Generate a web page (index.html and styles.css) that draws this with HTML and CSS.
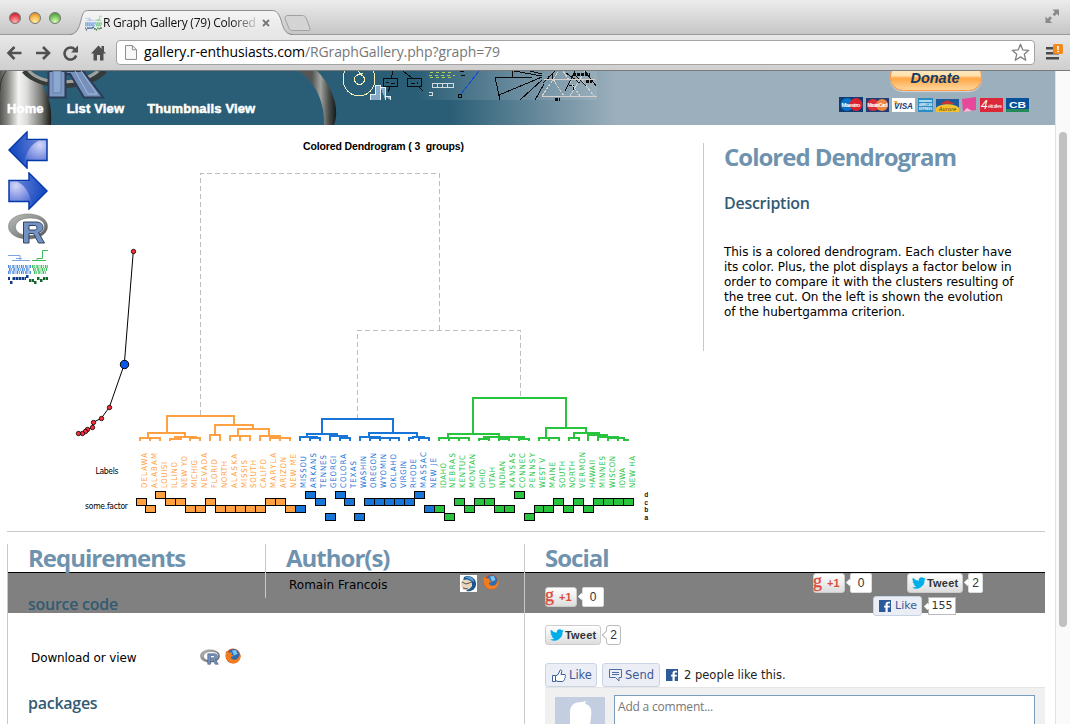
FILE: index.html
```html
<!DOCTYPE html>
<html lang="en">
<head>
<meta charset="utf-8">
<title>R Graph Gallery (79) Colored Dendrogram</title>
<link rel="stylesheet" href="styles.css">
</head>
<body>
<svg class="defs" width="0" height="0">
  <defs>
    <radialGradient id="blue" gradientUnits="userSpaceOnUse" cx="32" cy="14" r="27"><stop offset="0" stop-color="#d3d6f8"/><stop offset=".5" stop-color="#7d90e0"/><stop offset="1" stop-color="#1a4fc2"/></radialGradient>
    <linearGradient id="silver" x1="0" y1="0" x2="1" y2="1"><stop offset="0" stop-color="#b9bcb9"/><stop offset=".5" stop-color="#8d918e"/><stop offset="1" stop-color="#4c504d"/></linearGradient>
    <symbol id="rlogo" viewBox="0 0 40 30">
      <path fill-rule="evenodd" fill="url(#silver)" stroke="#666" stroke-width=".5" d="M20 .5C31 .5 39.500 5.500 39.500 13S31 25.500 20 25.500.500 20.500.500 13 9 .500 20 .500ZM22 4.500C13 4.500 7.500 8.500 7.500 13.500S13 22 22 22 36.500 18.500 36.500 13 31 4.500 22 4.500Z"/>
      <path fill-rule="evenodd" fill="#7292c4" stroke="#33425f" stroke-width="1" d="M15.500 8.500H28C33 8.500 35 11 35 14C35 17 33 18.500 30.500 19L36.500 29.500H30.500L25.500 20H21V29.500H15.500ZM21 12V16.500H27C29.500 16.500 29.500 12 27 12Z"/>
    </symbol>
    <symbol id="firefox" viewBox="0 0 16 16">
      <circle cx="8" cy="8" r="7.500" fill="#d9541e"/><circle cx="8.500" cy="6.500" r="5.500" fill="#2a6fb5"/><path d="M7 2.500L11 2 12.500 6 9 7.500Z" fill="#7cc4ee"/>
      <path d="M1 3C0 8 1 14 7.500 15.300C13 16 16.500 11 15.500 6C14.500 11 11 12.500 8 11.500C6 11 5.500 9.500 6.500 8.500L9 8 6.500 6.500 7 4.500 4 4.500Z" fill="#f07c1e"/><path d="M15.500 6C15 10 12 13.500 8 13.500L5 12.500C10 15 14 12 15.500 6Z" fill="#ffd257"/>
    </symbol>
    <symbol id="bird" viewBox="0 0 24 20"><path fill="#00aeea" d="M24 2.500a10 10 0 0 1-2.800.8A5 5 0 0 0 23.300.6a10 10 0 0 1-3.100 1.200 4.900 4.900 0 0 0-8.400 4.500A14 14 0 0 1 1.700 1.200a4.900 4.900 0 0 0 1.500 6.500A5 5 0 0 1 1 7.100c0 2.400 1.700 4.400 3.900 4.900a5 5 0 0 1-2.200.1 4.900 4.900 0 0 0 4.600 3.400A10 10 0 0 1 0 17.500 14 14 0 0 0 21.500 5Z"/></symbol>
    <symbol id="fb" viewBox="0 0 12 12"><path fill="#2d5b99" d="M0 0H12V12H0Z"/><path fill="#fff" d="M6.500 12V7.500H5V5.700H6.500V4.400C6.500 2.500 7.500 1.700 9 1.700H11V3.500H9.600C8.900 3.500 8.700 3.800 8.700 4.500V5.700H11L10.700 7.500H8.700V12Z"/></symbol>
  </defs>
</svg>

<div class="tabstrip">
  <div class="lights"><i class="red"></i><i class="amber"></i><i class="green"></i></div>
  <div class="tab">
    <svg class="tab-shape" width="224" height="25" viewBox="0 0 224 25"><defs><linearGradient id="tabfill" x2="0" y2="1"><stop stop-color="#f5f5f5"/><stop offset="1" stop-color="#e6e6e6"/></linearGradient></defs><path d="M0 25C8 25 10 18 12 10S15 .500 20 .500H203C208 .500 210 4 212 10S215 24.500 224 25Z" fill="url(#tabfill)"/><path d="M0 24.500C8 24.500 10 18 12 10S15 .500 20 .500H203C208 .500 210 4 212 10S215 24.500 224 24.500" fill="none" stroke="#8f8f8f"/></svg>
    <svg class="favicon" width="17" height="16" viewBox="0 0 40 35"><use href="#thumb"/></svg>
    <span class="tab-title">R Graph Gallery (79) Colored</span>
    <svg class="tab-close" width="8" height="8"><path d="M1 1L7 7M7 1L1 7" stroke="#777" stroke-width="1.800"/></svg>
  </div>
  <svg class="newtab" width="28" height="17"><path d="M1 4C1 1 2 .500 4 .500H18C20.500 .500 21.500 1.500 22.500 4L25.500 12C26.500 15 26 15.500 24 15.500H9C6.500 15.500 5.500 14.500 4.500 12Z" fill="#d4d4d4" stroke="#a2a2a2"/></svg>
  <svg class="fullscreen" width="15" height="15"><path d="M7.500 .500H14V7L11.800 4.800 9.500 7.200 7.500 5.200 9.800 2.900ZM7 14H.500V7.500L2.700 9.700 5 7.300 7 9.300 4.700 11.600Z" fill="#8a8a8a"/></svg>
</div>
<div class="toolbar">
  <svg class="nav-icons" width="104" height="18" viewBox="0 0 104 18">
    <g fill="none" stroke="#505050" stroke-width="2.600"><path d="M21.500 9H9.500M14.500 3L8.500 9 14.500 15M36 9H48M43 3L49 9 43 15"/><path d="M75 5.500A6 6 0 1 0 76.200 11.500" /></g>
    <path d="M78 1.500V8.500H71Z" fill="#505050"/>
    <path d="M98.500 1.500L106 9.500H103.500V16.500H100V11H97V16.500H93.500V9.500H91L94.500 5.800Z" fill="#505050"/>
    <path d="M101.500 2H104V7H101.500Z" fill="#505050"/>
  </svg>
  <div class="omnibox">
    <svg width="12" height="15" viewBox="0 0 13 16"><path d="M.5.500H8L12.500 5V15.500H.5ZM8 .500V5H12.500" fill="#f8f8f8" stroke="#808080"/></svg>
    <span class="url"><b>gallery.r-enthusiasts.com</b>/RGraphGallery.php?graph=79</span>
    <svg class="star" width="19" height="19" viewBox="0 0 19 19"><path d="M9.500 1.200L11.800 6.900 17.800 7.300 13.200 11.200 14.700 17.200 9.500 13.900 4.300 17.200 5.800 11.200 1.200 7.300 7.200 6.900Z" fill="#fff" stroke="#808080" stroke-width="1.300" stroke-linejoin="round"/></svg>
  </div>
  <svg class="menu" width="17" height="17"><path d="M0 4H13M0 9H13M0 14H13" stroke="#4a4a4a" stroke-width="2.600" transform="translate(0 .3)"/><rect x="7" y="0" width="10" height="10" rx="1.500" fill="#f28a1d"/><path d="M12 2V5.800M12 6.800V8.300" stroke="#fff" stroke-width="1.600"/></svg>
</div>

<div class="viewport">
<div class="page">
  <header class="banner">
    <svg class="banner-art" width="1055" height="54" viewBox="0 0 1055 54">
      <defs>
        <linearGradient id="sky" gradientUnits="userSpaceOnUse" x1="450" x2="615"><stop stop-color="#2a5e76"/><stop offset="1" stop-color="#9bafbc"/></linearGradient>
        <linearGradient id="sky2" gradientUnits="userSpaceOnUse" x1="415" x2="600"><stop stop-color="#2a5e76"/><stop offset="1" stop-color="#9bafbc"/></linearGradient>
        <linearGradient id="ring" gradientUnits="userSpaceOnUse" x1="0" x2="53"><stop stop-color="#555"/><stop offset=".14" stop-color="#888983"/><stop offset=".35" stop-color="#f4f4f2"/><stop offset=".5" stop-color="#ddd"/><stop offset=".78" stop-color="#777874"/><stop offset=".94" stop-color="#242622"/><stop offset="1" stop-color="#10201f"/></linearGradient>
        <linearGradient id="ring2" gradientUnits="userSpaceOnUse" x1="312" x2="336"><stop stop-color="#555"/><stop offset=".35" stop-color="#a0a39e"/><stop offset=".7" stop-color="#4a4e4b"/><stop offset="1" stop-color="#141b1c"/></linearGradient>
      </defs>
      <path fill="url(#sky)" d="M0 0H1055V54H0Z"/><path fill="url(#sky2)" d="M400 0H597V29H400Z"/>
      <path fill="url(#ring)" d="M0 0H30C43 10 53 28 51 54H0Z"/>
      <path fill="none" stroke="#333632" stroke-width="1" d="M6 0C1 8 0 12 0 20"/>
      <path d="M24 0C38 17 84 21 105 0" fill="none" stroke="#353b38" stroke-width="5"/><path d="M29 0C42 14 80 15 98 0" fill="none" stroke="#a0a19c" stroke-width="3"/>
      <path d="M48.500 0H65.500V26.500H48.500Z" fill="#7e9ac2" stroke="#2c3b55" stroke-width="2"/><path d="M53 0H61V22H53Z" fill="#8da8cf" stroke="#6280ab"/>
      <path d="M65.500 0H83L103 26.500H84L70 3H66Z" fill="#7591bb" stroke="#2c3b55" stroke-width="2"/><path d="M75 0L88 23H97L81 0" fill="none" stroke="#a4b9d8"/>
      <path d="M299 0H317C331 13 341 38 334 54H324C325 32 316 12 299 0Z" fill="url(#ring2)"/>
      <g shape-rendering="crispEdges" fill="none" stroke="#0b0b0b">
        <g stroke="#f3efb5"><ellipse cx="359" cy="8" rx="16" ry="17"/><circle cx="359.500" cy="8.500" r="5"/><path d="M359 2H363M358 0L361 3"/></g>
        <path d="M370.500 29V23.500H375.500V14.500H380.500V29M380.500 16.500H385.500V29M385.500 25.500H390.500V29" fill="#86abc8" stroke="#e7f0f5"/>
        <path d="M383.500 7.500H397.500V15.500H383.500ZM407.500 7.500H421.500V15.500H407.500ZM393 0L391 8M403 0L412 7M390 16L388 21M418 15L423 20M386 11H389M391 12H395M411 12H415M417 11V13M460 0H464M461 4H465"/>
        <path stroke="#abcf52" stroke-dasharray="3 3" d="M430 1H454M429 4H455M430 6H453"/><path stroke="#cfdbe0" d="M432.500 12.500H453.500V16.500H432.500ZM437.500 12V16M442.500 12V16M447.500 12V16M429 21.500H432.500V24.500H429"/>
        <path stroke="#124bd5" d="M461 23L479 0"/><path d="M458.500 23.500H461.500V26.500H458.500Z"/>
        <path d="M495 6L500 29M496 6H532M499 24L542 6M520 29L542 9M535 29L544 13M512 0V6M514 0L542 5M530 0L542 3M548 5V8M552 3V8M555 0L543 12M566 2L580 12M565 20L575 0M574 3L588 17M560 25H568M569 14H573V20M585 0L596 15"/>
        <path stroke="#d5d5ce" stroke-dasharray="3 1" d="M542 25L558 1M553 8L564 25M570 25L585 0M581 8L594 25M563 0L580 25"/><path stroke="#d5d0ce" d="M544 8H595M542 25H597"/>
        <path stroke-width="3" stroke-dasharray="3 1" d="M573 3H590M586 10H592M555 28H560"/>
      </g>
    </svg>
    <nav class="site-nav"><a>Home</a><a>List View</a><a>Thumbnails View</a></nav>
    <div class="donate">
      <div class="donate-btn">Donate</div>
      <svg class="cards" width="191" height="15" viewBox="0 0 191 15">
        <path fill="#123a73" d="M0 0H24V15H0Z"/><circle cx="8" cy="7.500" r="6.500" fill="#0875c8"/><circle cx="17" cy="7.500" r="6.500" fill="#d8232f"/><text x="2.500" y="10" font-size="6" textLength="19" class="card-t">Maestro</text>
        <path fill="#203c70" d="M27 1H50V15H27Z"/><circle cx="34" cy="8" r="6" fill="#d9303a"/><circle cx="43" cy="8" r="6" fill="#ee8745"/><text x="28.500" y="10" font-size="5" textLength="20" class="card-t">MasterCard</text>
        <path fill="#fff" d="M53 1H76V15H53Z"/><path fill="#f0a126" d="M54 4L58 4 60 9Z"/><text x="55" y="11.500" font-size="9" textLength="19" lengthAdjust="spacingAndGlyphs" class="card-v">VISA</text>
        <path fill="#2b8dc2" d="M79 1H94V15H79Z"/><path d="M80 3H93V5H80Z" fill="#a6daf0"/><text x="80" y="9" font-size="4" textLength="13" lengthAdjust="spacingAndGlyphs" class="card-t">AMERICAN</text><text x="80" y="13" font-size="4" textLength="13" lengthAdjust="spacingAndGlyphs" class="card-t">EXPRESS</text>
        <path fill="#1c5c9c" d="M97 2H120V15H97Z"/><path fill="#f6c12f" d="M97 11C101 6 116 6 120 11V15H97Z"/><path fill="#c93432" d="M101 7L108 3 116 7Z"/><text x="100" y="13.500" font-size="5" textLength="17" class="card-a">Aurore</text>
        <path fill="#e8489c" d="M123 2L137 0V13L124 15Z"/><path d="M124 15L128 11 133 14" fill="#f7bdd9"/>
        <path fill="#da2838" d="M141 1H164V15H141Z"/><text x="142" y="12" font-size="12" class="card-t it thin">4</text><text x="149" y="11" font-size="6" textLength="14" class="card-t it thin">étoiles</text>
        <path fill="#07519b" d="M167 1H190V15H167Z"/><path fill="#248b58" d="M167 12H190V15H167Z"/><text x="170" y="11" font-size="9" textLength="17" lengthAdjust="spacingAndGlyphs" class="card-t">CB</text>
      </svg>
    </div>
  </header>

  <main class="plot-row">
    <div class="side-icons">
      <svg width="40" height="38" viewBox="0 0 40 38"><path d="M1 19L19 1V8.500H39V29.500H19V37Z" fill="url(#blue)" stroke="#0438aa" stroke-width="1.500"/><path d="M2 19L18.500 3V9.500H31C21 14 18 24 16 32Z" fill="#1b4cc0" opacity=".6"/></svg>
      <svg width="40" height="38" viewBox="0 0 40 38"><g transform="matrix(-1 0 0 1 40 0)"><path d="M1 19L19 1V8.500H39V29.500H19V37Z" fill="url(#blue)" stroke="#0438aa" stroke-width="1.500"/><path d="M2 19L18.500 3V9.500H31C21 14 18 24 16 32Z" fill="#1b4cc0" opacity=".6"/></g></svg>
      <svg width="40" height="31"><use href="#rlogo" width="40" height="31"/></svg>
      <svg width="40" height="35" viewBox="0 0 40 35"><g id="thumb"><path d="M0 6.500H12V11M4 11.500H22M8 9.500H14" fill="none" stroke="#7ba5e8"/><path d="M24 11.500H38M29 11V9.500H34.500V1.500H40" fill="none" stroke="#3fbc5c"/><path d="M0 17.500H23M1 20.500H22M0 23.500H23" stroke="#4b89df" stroke-width="3" stroke-dasharray="1.500 .8 .8 1.200"/><path d="M24 17.500H40M25 20.500H39M26 23.500H38" stroke="#3cc15c" stroke-width="3" stroke-dasharray="1.500 .8 .8 1.200"/><path d="M0 29.500H2M4.500 29.500H18M18 27.500H21M2 33.500H5" stroke="#123a86" stroke-width="3" stroke-dasharray="2.500 .5"/><path d="M21 31.500H26M26 33.500H29M29 29.500H32M32 31.500H35M35 29.500H40" stroke="#116628" stroke-width="3" stroke-dasharray="2.500 .5"/></g></svg>
    </div>
    <svg class="plot" width="640" height="400" viewBox="48 125 640 400">
      <text class="p-title" x="303" y="150" textLength="161" xml:space="preserve">Colored Dendrogram ( 3  groups)</text>
      <g shape-rendering="crispEdges" fill="none">
        <path stroke="#bdbdbd" stroke-dasharray="5 3" d="M200.500 415V173.500H439.500V330M357.500 419V330.500H520.500V398"/>
        <path stroke="#ffa042" stroke-width="2" d="M167 433V416H234V425M148 438V433H185V437M140 441V438H160V441M150 438V441M175 439V437H196V438M170 441V439H181V438M190 441V438H200V441M215 435V425H253V429M210 441V435H220V441M238 436V429H269V436M230 441V436H250V441M240 441V436M260 441V436H280V438M270 441V438H290V441M280 438V441"/>
        <path stroke="#1976d9" stroke-width="2" d="M322 434V419H393V433M307 437V434H337V437M300 441V437H317V438M310 441V438H320V441M330 441V436H347V438M340 441V438H350V441M369 437V433H417V437M360 441V437H380V438M370 441V438H399V441M380 438V441M390 438V441M409 441V438H413V437H424V438H429V441M419 441V438H429"/>
        <path stroke="#28c43e" stroke-width="2" d="M473 434V398H566V428M448 438V434H499V437M439 441V438H469V441M449 441V438M459 438V441M479 441V439H489V441M484 439V437H524V439M499 441V439H509V441M519 441V439H529V441M546 438V428H586V433M539 441V438H559V441M549 438V441M574 438V433H599V435M569 441V438H579V441M588 441V435H607V437M598 441V437H618V439M608 441V438H624V440H629M618 439V441"/>
      </g>
      <g id="leaves"></g>
      <path d="M133.300 251.300L124.300 364.300 109.300 407.300 101.300 418.300 93.300 422.300 92.300 427.300 87.300 429.300 85.700 431.300 82.300 433.300H78.300" fill="none" stroke="#000"/>
      <g fill="#ff2a3a" stroke="#000" stroke-width=".8"><circle cx="133.500" cy="251.500" r="2.200"/><circle cx="109.500" cy="407.500" r="2.200"/><circle cx="101.500" cy="418.500" r="2.200"/><circle cx="93.500" cy="422.500" r="2.200"/><circle cx="92.500" cy="427.500" r="2.200"/><circle cx="87.500" cy="429.500" r="2.200"/><circle cx="85.500" cy="431.500" r="2.200"/><circle cx="82.500" cy="433.500" r="2.200"/><circle cx="78.500" cy="433.500" r="2.200"/><circle cx="124.500" cy="364.500" r="4.200" fill="#0b57e8" stroke-width="1"/></g>
      <g class="p-small"><text x="95.500" y="474" textLength="23">Labels</text><text x="85" y="509" textLength="43">some.factor</text></g>
      <g class="p-level"><text x="644.500" y="497">d</text><text x="644.500" y="504.700">c</text><text x="644.500" y="512.300">b</text><text x="644.500" y="520">a</text></g>
    </svg>
    <section class="about">
      <h2>Colored Dendrogram</h2>
      <h3>Description</h3>
      <p>This is a colored dendrogram. Each cluster have<br>its color. Plus, the plot displays a factor below in<br>order to compare it with the clusters resulting of<br>the tree cut. On the left is shown the evolution<br>of the hubertgamma criterion.</p>
    </section>
  </main>

  <div class="details">
    <section class="col requirements">
      <h2>Requirements</h2>
      <h3 class="src">source code</h3>
      <div class="download"><span>Download or view</span><svg width="20" height="16"><use href="#rlogo" width="20" height="16"/></svg><svg width="16" height="16"><use href="#firefox" width="16" height="16"/></svg></div>
      <h3 class="pkg">packages</h3>
    </section>
    <section class="col authors">
      <h2>Author(s)</h2>
      <div class="author"><span>Romain Francois</span>
        <svg width="17" height="17"><path d="M0 0H17V17H0Z" fill="#fff"/><path d="M4 2C9-1 17 3 16 10C15 15 11 17 6 16L12 11 11 6 3 6Z" fill="#1c5590"/><path d="M5 2.500C9 0 14 3 14 7L9 4Z" fill="#5aa0d0"/><path d="M1 7C4 3 10 4 12 8C12 14 8 15 4 15 1 13 1 10 1 7Z" fill="#e8d5bd"/><path d="M2 7L6 9 12 7M3 13L8 14" stroke="#59544e" fill="none"/></svg>
        <svg width="16" height="16"><use href="#firefox" width="16" height="16"/></svg></div>
    </section>
    <section class="col social">
      <h2>Social</h2>
      <div class="share-row">
        <div class="share gplus-row"><span class="btn gplus"><em>g</em>+1</span><span class="bubble gcount">0</span></div>
        <div class="share-block">
          <div class="share"><span class="btn gplus"><em>g</em>+1</span><span class="bubble gcount">0</span><span class="btn tweet second"><svg width="14" height="12"><use href="#bird" width="14" height="12"/></svg>Tweet</span><span class="bubble tcount">2</span></div>
          <div class="share likes"><span class="btn like-sm"><svg width="12" height="12"><use href="#fb"/></svg>Like</span><span class="bubble lcount">155</span></div>
        </div>
      </div>
      <div class="share tweet-row"><span class="btn tweet"><svg width="14" height="12"><use href="#bird" width="14" height="12"/></svg>Tweet</span><span class="bubble tcount line">2</span></div>
      <div class="fb-row">
        <span class="fb-btn like"><svg width="14" height="13"><path d="M.5 6.500H3.500V12.500H.5ZM3.500 7L6 5.500 8 1.500C8 .300 9.800.500 9.800 2.500L9 5.500H13C14 6 13.500 7.500 13 7.500 13.800 8.500 13 9.500 12.500 9.500 13 11 12 11.500 11.500 11.500 11.500 12.300 11 12.500 10 12.500H6L3.500 11.500" fill="#fff" stroke="#3b5f9e"/></svg>Like</span>
        <span class="fb-btn send"><svg width="13" height="13"><path d="M.5.500H12.500V8.500H10V12L6.500 8.500H.5ZM3 3.500H10M3 5.500H10" fill="none" stroke="#4b6ea6"/></svg>Send</span>
        <svg class="fbi" width="12" height="12"><use href="#fb"/></svg><span class="people">2 people like this.</span>
      </div>
      <div class="comments">
        <svg width="50" height="27"><path fill="#c3cfe0" d="M0 0H50V27H0Z"/><path fill="#fff" d="M15 27V18C14 9 18 5 27 5L31 4 30 7C36 8 37 13 36 20L35 27Z"/></svg>
        <div class="field">Add a comment...</div>
      </div>
    </section>
  </div>
</div>
<div class="scrollbar"><div class="thumb"></div></div>
</div>
<script src="plot.js"></script>
</body>
</html>
```
FILE: plot.js
```js
// Leaves of the tree: label, printed length in px, level of the factor.
const groups = [
  ['#ffa042', 'DELAWA 35 c|ALABAM 35 b|LOUISI 26 d|ILLINO 26 c|NEW_YO 32 c|MICHIG 28 b|NEVADA 35 b|FLORID 29 c|NORTH 27 b|ALASKA 34 b|MISSIS 28 b|SOUTH 28 b|CALIFO 29 b|MARYLA 35 c|ARIZON 31 c|NEW_ME 34 b'],
  ['#1976d9', 'MISSOU 32 b|ARKANS 35 d|TENNES 33 c|GEORGI 32 a|COLORA 34 d|TEXAS 27 c|WASHIN 32 a|OREGON 35 c|WYOMIN 34 c|OKLAHO 34 c|VIRGIN 27 c|RHODE 29 c|MASSAC 36 d|NEW_JE 30 b'],
  ['#28c43e', 'IDAHO 25 b|NEBRAS 35 a|KENTUC 33 c|MONTAN 34 b|OHIO 19 c|UTAH 21 c|INDIAN 27 b|KANSAS 35 b|CONNEC 35 d|PENNSY 35 a|WEST_V 30 b|MAINE 26 b|SOUTH 27 c|NORTH 27 b|VERMON 36 c|HAWAII 28 b|MINNES 32 c|WISCON 32 c|IOWA 20 c|NEW_HA 32 c']
];
const levelTop = { d: 491.5, c: 498.5, b: 505.5, a: 513.5 };
const NS = 'http://www.w3.org/2000/svg';
const root = document.getElementById('leaves');
let i = 0;
for (const [color, list] of groups) {
  for (const item of list.split('|')) {
    const [name, length, level] = item.split(' ');
    const box = document.createElementNS(NS, 'rect');
    const attrs = { x: Math.floor(136 + i * 9.95) + 0.5, y: levelTop[level], width: 10, height: 7, fill: color, stroke: '#000' };
    for (const k in attrs) box.setAttribute(k, attrs[k]);
    const label = document.createElementNS(NS, 'text');
    label.setAttribute('class', 'leaf');
    label.setAttribute('transform', `translate(${147 + i * 9.95} 488) rotate(-90)`);
    label.setAttribute('textLength', length);
    label.setAttribute('fill', color);
    label.textContent = name.replace('_', ' ');
    root.append(box, label);
    i++;
  }
}
```
FILE: styles.css
```css
* { box-sizing: border-box; }
body { margin: 0; width: 1070px; height: 724px; overflow: hidden; background: #fff; font: 12px/15px "DejaVu Sans", Verdana, sans-serif; color: #000; }
svg { display: block; flex: none; }
.defs { position: absolute; }
h2, h3, p { margin: 0; }
h2 { font: bold 24px/28px "Open Sans", "Trebuchet MS", sans-serif; letter-spacing: -1px; color: #6f93ae; white-space: nowrap; }
h3 { font: 600 16px/20px "Open Sans", "Trebuchet MS", sans-serif; letter-spacing: -.27px; color: #335a72; }

.tabstrip { height: 35px; display: flex; background: linear-gradient(#ececec, #c6c6c6); border-bottom: 1px solid #9a9a9a; }
.lights { display: flex; gap: 8px; padding: 12px 0 0 9px; width: 69px; }
.lights i { width: 12px; height: 12px; border-radius: 50%; border: 1px solid #777; }
.red { background: radial-gradient(circle at 50% 85%, #ffb0b0, #e5404a 60%, #b01c28); }
.amber { background: radial-gradient(circle at 50% 85%, #ffefa0, #f5ae45 60%, #c07a20); }
.green { background: radial-gradient(circle at 50% 85%, #d8ffb5, #6fbd57 60%, #3c8430); }
.tab { position: relative; width: 216px; height: 25px; margin-top: 10px; display: flex; align-items: center; padding-left: 16px; }
.tab-shape { position: absolute; left: 0; top: 0; }
.favicon, .tab-title, .tab-close { position: relative; }
.tab-title { margin-left: 1px; width: 154px; white-space: nowrap; font: 12px/16px "Open Sans", sans-serif; letter-spacing: -.22px; color: #111; -webkit-mask-image: linear-gradient(90deg, #000 128px, rgba(0, 0, 0, .15) 154px); }
.tab-close { margin-left: 5px; }
.newtab { margin: 15px 0 0 -1px; }
.fullscreen { margin: 9px 10px 0 auto; }
.toolbar { height: 36px; display: flex; align-items: center; background: linear-gradient(#e8e8e8, #cfcfcf); border-bottom: 1px solid #7a7a7a; }
.nav-icons { overflow: visible; width: 104px; margin-left: 0; }
.omnibox { margin-left: 12px; width: 919px; height: 25px; display: flex; align-items: center; padding: 0 4px 0 8px; background: #fff; border: 1px solid #a3a3a3; border-radius: 4px; }
.url { margin-left: 7px; flex: 1; font: 14px/20px "Open Sans", sans-serif; letter-spacing: -.11px; color: #777; padding-bottom: 1px; }
.url b { font-weight: 400; color: #000; }
.menu { margin-left: 11px; }

.viewport { display: flex; height: 653px; }
.page { width: 1055px; }
.scrollbar { width: 15px; padding: 61px 0 0 3px; background: #fafafa; border-left: 1px solid #e2e2e2; }
.thumb { width: 8px; height: 495px; border-radius: 4px; background: #c1c1c1; }

.banner { position: relative; height: 54px; display: flex; overflow: hidden; }
.banner-art { position: absolute; left: 0; top: 0; }
.site-nav { position: relative; display: flex; gap: 23px; padding: 30px 0 0 7px; font: bold 13px/16px "Liberation Sans", Arial, sans-serif; letter-spacing: .15px; color: #fff; -webkit-text-stroke: .5px #fff; }
.donate { position: relative; margin-left: auto; width: 216px; }
.donate-btn { width: 92px; height: 28px; margin: -8px 0 6px 51px; border-radius: 13px; border: 1px solid #ff9a43; box-shadow: 0 1px 1px #fff8; background: linear-gradient(#fff0d0 0, #ffe0ac 45%, #ffa744 55%, #ffd69d 100%); text-align: center; font: italic bold 14.5px/17px "Liberation Sans", Arial, sans-serif; color: #163a63; padding: 6px 2px 0 0; }
.card-t { font-family: "Liberation Sans", sans-serif; font-weight: bold; fill: #fff; }
.card-v { font-family: "Liberation Sans", sans-serif; font-weight: bold; font-style: italic; fill: #183b78; }
.card-a { font-family: "Liberation Sans", sans-serif; font-style: italic; fill: #40351c; }
.it { font-style: italic; }
.thin { font-weight: normal; }

.plot-row { display: flex; height: 406px; margin: 0 10px 0 7px; }
.side-icons { display: flex; flex-direction: column; width: 41px; padding: 6px 0 0 1px; gap: 3px; }
.side-icons svg:nth-child(4) { margin-top: 2px; }
.p-title { font: bold 10.5px "Liberation Sans", Arial, sans-serif; }
.p-small { font: 8.5px "DejaVu Sans Condensed", "DejaVu Sans", sans-serif; }
.p-level { font: 6.5px "Liberation Sans", Arial, sans-serif; stroke: #000; stroke-width: .2px; }
.leaf { font: 7.8px "DejaVu Sans Condensed", "DejaVu Sans", sans-serif; }
.about { width: 342px; height: 208px; margin: 18px 0 0 15px; border-left: 1px solid #c8c8c8; padding-left: 20px; }
.about h3 { margin-top: 22px; }
.about p { margin-top: 32px; white-space: nowrap; letter-spacing: -.04px; }

.details { margin: 0 10px 0 7px; border-top: 1px solid #c8c8c8; padding-top: 12px; height: 193px; display: grid; grid-template-columns: 258px 259px 521px; background: linear-gradient(#000 0 1px, #808080 1px) 1px 40px / 1037px 41px no-repeat; }
.col { border-left: 1px solid #c8c8c8; padding-left: 20px; height: 180px; min-width: 0; }
.authors { height: 54px; }
.src { margin-top: 22px; }
.download { display: flex; align-items: center; margin: 35px 0 0 3px; height: 17px; letter-spacing: -.1px; }
.download span { width: 169px; padding-top: 1px; }
.download svg { margin-top: -2px; }
.download svg + svg { margin: -4px 0 0 5px; }
.pkg { margin-top: 27px; }
.author { display: flex; margin: 2px 0 0 3px; }
.author span { width: 171px; line-height: 22px; }
.author svg { margin-top: 1px; }
.author svg + svg { margin: 0 0 0 6px; }

.share-row { display: flex; height: 53px; padding-top: 1px; }
.share { display: flex; }
.gplus-row { margin-top: 14px; height: 20px; }
.share-block { margin-left: 209px; }
.btn { display: flex; align-items: center; height: 20px; border: 1px solid #ccc; border-radius: 3px; background: linear-gradient(#fff, #ddd); white-space: nowrap; }
.gplus { width: 32px; font: bold 11px/18px "Liberation Sans", sans-serif; color: #d6503f; }
.gplus em { width: 14px; margin-left: -1px; font: 18px/15px "Liberation Serif", serif; margin-top: -4px; color: #dd4b39; -webkit-text-stroke: .4px #dd4b39; }
.bubble { position: relative; height: 20px; margin-left: 5px; background: #fff; border: 1px solid #ddd; border-radius: 2px; text-align: center; color: #333; font: 12px/18px "Liberation Sans", sans-serif; }
.bubble::before { content: ""; position: absolute; left: -4px; top: 6px; width: 5px; height: 5px; background: #fff; transform: rotate(45deg); }
.gcount { width: 22px; }
.tweet { width: 56px; padding-left: 4px; font: bold 11px/18px "Liberation Sans", sans-serif; color: #333; letter-spacing: .2px; }
.tweet svg { margin-right: 1px; }
.tcount { width: 15px; }
.second { margin-left: 35px; }
.line { border-color: #bbb; border-radius: 3px; }
.line::before { border-left: 1px solid #bbb; border-bottom: 1px solid #bbb; }
.likes { margin: 3px 0 0 60px; }
.like-sm { width: 49px; height: 20px; padding-left: 5px; border-color: #c5d3e4; background: #eceef5; font: 11px/18px "DejaVu Sans", sans-serif; color: #3b5998; }
.like-sm svg { margin-right: 4px; }
.lcount { width: 28px; height: 18px; margin: 1px 0 0 6px; font: 11px/16px "DejaVu Sans", sans-serif; border-color: #bbb; border-radius: 0; }
.tweet-row { height: 38px; }
.fb-row { display: flex; align-items: center; height: 24px; }
.fb-btn { display: flex; align-items: center; height: 24px; background: #eceef5; border: 1px solid #cad4e7; border-radius: 3px; color: #3b5998; font-size: 11.5px; padding-left: 6px; }
.like { width: 52px; }
.like svg { margin-right: 3px; }
.send { width: 58px; margin-left: 5px; }
.send svg { margin-right: 3px; }
.fbi { margin: 0 6px; }
.people { color: #222; font-size: 11.5px; white-space: nowrap; }
.comments { display: flex; height: 37px; width: 500px; background: #f0f0f0; border-top: 1px solid #e5e5e5; padding-left: 10px; overflow: hidden; }
.comments svg { margin-top: 9px; }
.field { width: 421px; height: 50px; margin: 7px 0 0 9px; border: 1px solid #7b9dbd; background: #fff; padding: 2px 3px; font: 12px/18px "Open Sans", sans-serif; letter-spacing: -.2px; color: #777; }
```
